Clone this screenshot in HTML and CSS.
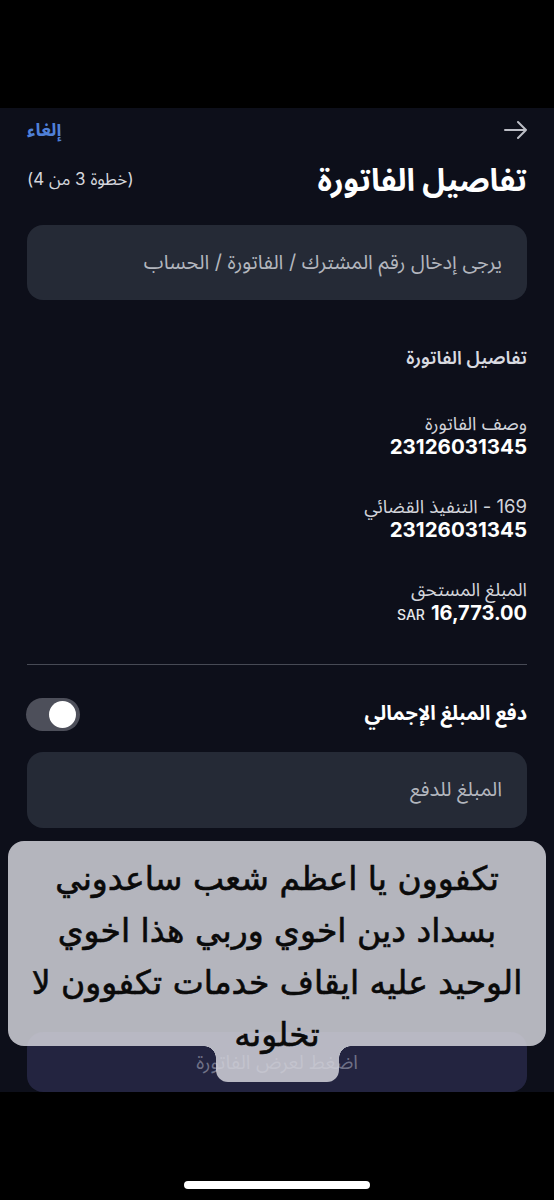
FILE: index.html
```html
<!DOCTYPE html>
<html lang="ar" dir="rtl">
<head>
<meta charset="utf-8">
<title>تفاصيل الفاتورة</title>
<link rel="stylesheet" href="styles.css">
</head>
<body>
<div class="phone">
  <div class="status"></div>
  <main class="screen">
    <div class="topbar">
      <span class="back">
        <svg width="26" height="20" viewBox="0 0 26 20"><path d="M2 10 H23 M15 2 L23 10 L15 18" fill="none" stroke="#bcbec6" stroke-width="2" stroke-linecap="round" stroke-linejoin="round"/></svg>
      </span>
      <span class="cancel">إلغاء</span>
    </div>
    <div class="titlerow">
      <h1 class="title">تفاصيل الفاتورة</h1>
      <span class="step">(خطوة 3 من 4)</span>
    </div>
    <div class="field-input">يرجى إدخال رقم المشترك / الفاتورة / الحساب</div>

    <h2 class="section">تفاصيل الفاتورة</h2>

    <div class="info first">
      <div class="label">وصف الفاتورة</div>
      <div class="value">23126031345</div>
    </div>
    <div class="info">
      <div class="label">169 - التنفيذ القضائي</div>
      <div class="value">23126031345</div>
    </div>
    <div class="info">
      <div class="label">المبلغ المستحق</div>
      <div class="value amount"><span class="num">16,773.00</span> <span class="cur">SAR</span></div>
    </div>

    <hr class="divider">

    <div class="toggle-row">
      <span class="toggle-label">دفع المبلغ الإجمالي</span>
      <span class="toggle"><span class="knob"></span></span>
    </div>

    <div class="field-input amount-input">المبلغ للدفع</div>

    <div class="btn">اضغط لعرض الفاتورة</div>
  </main>
  <div class="homebar"><span class="indicator"></span></div>

  <div class="caption">
    <div class="cap-main">تكفوون يا اعظم شعب ساعدوني<br>بسداد دين اخوي وربي هذا اخوي<br>الوحيد عليه ايقاف خدمات تكفوون لا<br>تخلونه</div>
    <div class="cap-tail"></div>
  </div>
</div>
</body>
</html>
```

FILE: styles.css
```css
* { box-sizing: border-box; }
html, body { margin: 0; padding: 0; background: #000; }
body {
  font-family: Inter, "Noto Sans Arabic", "DejaVu Sans", sans-serif;
  width: 554px;
  height: 1200px;
  overflow: hidden;
}
.phone { position: relative; width: 554px; height: 1200px; }
.status { height: 108px; background: #000; }
.screen {
  height: 984px;
  background: #0d0f1a;
  padding: 0 27px;
  display: flex;
  flex-direction: column;
}
.topbar {
  height: 44px;
  display: flex;
  align-items: center;
  justify-content: space-between;
}
.back { display: flex; margin-right: -2px; }
.cancel { color: #4f80d8; font-weight: 700; font-size: 18px; }
.titlerow {
  height: 56px;
  display: flex;
  align-items: center;
  justify-content: space-between;
}
.title { margin: 0; color: #fff; font-size: 31px; font-weight: 700; line-height: 40px; }
.step { color: #d4d6dc; font-size: 17px; }
.field-input {
  margin-top: 17px;
  height: 75px;
  border-radius: 16px;
  background: #252a36;
  padding: 0 25px;
  display: flex;
  align-items: center;
  color: #b3b6be;
  font-size: 20px;
}
.section {
  margin: 45px 0 0;
  font-size: 18.5px;
  font-weight: 600;
  color: #d8dae0;
  line-height: 24px;
}
.info { margin-top: 35px; }
.info.first { margin-top: 42px; }
.label { font-size: 18.5px; line-height: 24px; color: #d2d4da; }
.value { font-size: 20.5px; line-height: 24px; font-weight: 700; color: #fff; }
.amount { display: flex; align-items: baseline; gap: 6px; }
.amount .num { font-size: 20px; }
.amount .cur { font-size: 14px; font-weight: 500; color: #e6e7ea; }
.divider {
  margin: 37px 0 0;
  border: 0;
  height: 1px;
  background: #474a55;
}
.toggle-row {
  margin-top: 33px;
  height: 32px;
  display: flex;
  align-items: center;
  justify-content: space-between;
}
.toggle-label { color: #fff; font-size: 20px; font-weight: 700; }
.toggle {
  width: 54px;
  height: 33px;
  border-radius: 17px;
  background: #4d4f5a;
  display: flex;
  align-items: center;
  justify-content: flex-start;
  padding: 0 4px;
  margin-left: -1px;
}
.knob { width: 27px; height: 27px; border-radius: 50%; background: #fff; }
.amount-input { margin-top: 22px; height: 76px; }
.btn {
  margin-top: auto;
  height: 60px;
  border-radius: 16px;
  background: #232440;
  color: #6f7187;
  font-size: 19.5px;
  display: flex;
  align-items: center;
  justify-content: center;
}
.homebar {
  height: 108px;
  background: #000;
  display: flex;
  justify-content: center;
  padding-top: 89px;
}
.indicator { width: 186px; height: 8px; border-radius: 4px; background: #fff; }

.caption {
  position: absolute;
  top: 841px;
  left: 8px;
  width: 538px;
}
.cap-main {
  position: relative;
  z-index: 1;
  height: 205px;
  border-radius: 16px;
  background: rgba(208, 209, 216, 0.86);
  text-align: center;
  padding-top: 12px;
  font-family: "DejaVu Sans", sans-serif;
  font-size: 33px;
  line-height: 52px;
  color: #0a0a0a;
  -webkit-text-stroke: 0.6px #0a0a0a;
  white-space: nowrap;
}
.cap-tail {
  position: relative;
  width: 123px;
  height: 36px;
  margin: 0 auto;
  background: rgba(208, 209, 216, 0.86);
  border-radius: 0 0 12px 12px;
}
.cap-tail::before, .cap-tail::after {
  content: "";
  position: absolute;
  top: 0;
  width: 12px;
  height: 12px;
}
.cap-tail::before {
  right: -12px;
  background: radial-gradient(circle at 100% 100%, transparent 11.5px, rgba(208, 209, 216, 0.86) 12px);
}
.cap-tail::after {
  left: -12px;
  background: radial-gradient(circle at 0 100%, transparent 11.5px, rgba(208, 209, 216, 0.86) 12px);
}
```
